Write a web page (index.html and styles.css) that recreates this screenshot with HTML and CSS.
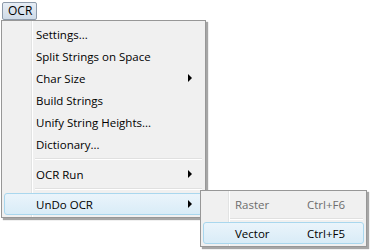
FILE: index.html
```html
<!DOCTYPE html>
<html>
<head>
<meta charset="utf-8">
<link rel="stylesheet" href="styles.css">
</head>
<body>
<div class="bar">
  <div class="menubtn">OCR</div>
</div>
<div class="menu main">
  <div class="item"><span class="label">Settings...</span></div>
  <div class="item"><span class="label">Split Strings on Space</span></div>
  <div class="item"><span class="label">Char Size</span><span class="arrow"></span></div>
  <div class="item"><span class="label">Build Strings</span></div>
  <div class="item"><span class="label">Unify String Heights...</span></div>
  <div class="item"><span class="label">Dictionary...</span></div>
  <div class="sep"></div>
  <div class="item"><span class="label">OCR Run</span><span class="arrow"></span></div>
  <div class="sep"></div>
  <div class="item hot"><span class="label">UnDo OCR</span><span class="arrow"></span></div>
</div>
<div class="menu sub">
  <div class="item disabled"><span class="label">Raster</span><span class="key">Ctrl+F6</span></div>
  <div class="sep"></div>
  <div class="item hot"><span class="label">Vector</span><span class="key">Ctrl+F5</span></div>
</div>
</body>
</html>
```
FILE: styles.css
```css
html, body {
  margin: 0;
  padding: 0;
  background: #ffffff;
  width: 370px;
  height: 251px;
  overflow: hidden;
  font-family: "Open Sans", "Noto Sans", sans-serif;
  font-size: 11.5px;
  color: #000;
}
.bar {
  padding: 2px 0 0 2px;
  display: flex;
}
.menubtn {
  box-sizing: border-box;
  width: 35px;
  height: 18px;
  border: 1px solid #8d9aaa;
  border-radius: 2px;
  background: linear-gradient(#e6edf5, #cfdbe8);
  padding-left: 5px;
  line-height: 15px;
  font-size: 12px;
}
.menu {
  position: absolute;
  box-sizing: border-box;
  background: #f0f0f0;
  border: 1px solid #979797;
  padding: 2px;
  box-shadow: 2px 2px 1px rgba(0,0,0,0.35);
}
.main {
  left: 1px;
  top: 20px;
  width: 205px;
  height: 198px;
  background: linear-gradient(to right, #f0f0f0 29px, #e2e3e3 29px, #e2e3e3 30px, #ffffff 30px, #ffffff 31px, #f0f0f0 31px);
}
.sub {
  left: 200px;
  top: 190px;
  width: 167px;
  height: 57px;
  background: linear-gradient(to right, #f0f0f0 27px, #e2e3e3 27px, #e2e3e3 28px, #ffffff 28px, #ffffff 29px, #f0f0f0 29px);
}
.item {
  box-sizing: border-box;
  height: 22px;
  display: flex;
  align-items: center;
  border: 1px solid transparent;
  border-radius: 3px;
  position: relative;
}
.main .item .label {
  margin-left: 31px;
  flex: 1;
}
.sub .item .label {
  margin-left: 31px;
  width: 72px;
}
.key {
  flex: 1;
}
.arrow {
  width: 0;
  height: 0;
  border-top: 4px solid transparent;
  border-bottom: 4px solid transparent;
  border-left: 4px solid #000;
  margin-right: 10px;
}
.sep {
  height: 8px;
  margin-left: 31px;
  margin-right: 1px;
  background: linear-gradient(#f0f0f0 3px, #e0e0e0 3px, #e0e0e0 4px, #ffffff 4px, #ffffff 5px, #f0f0f0 5px);
}
.sub .sep {
  height: 7px;
  margin-left: 27px;
}
.hot {
  border-color: #a9d7ee;
  background: linear-gradient(#eaf4fb, #d9ecf7);
}
.disabled {
  color: #6d6d6d;
}
```
